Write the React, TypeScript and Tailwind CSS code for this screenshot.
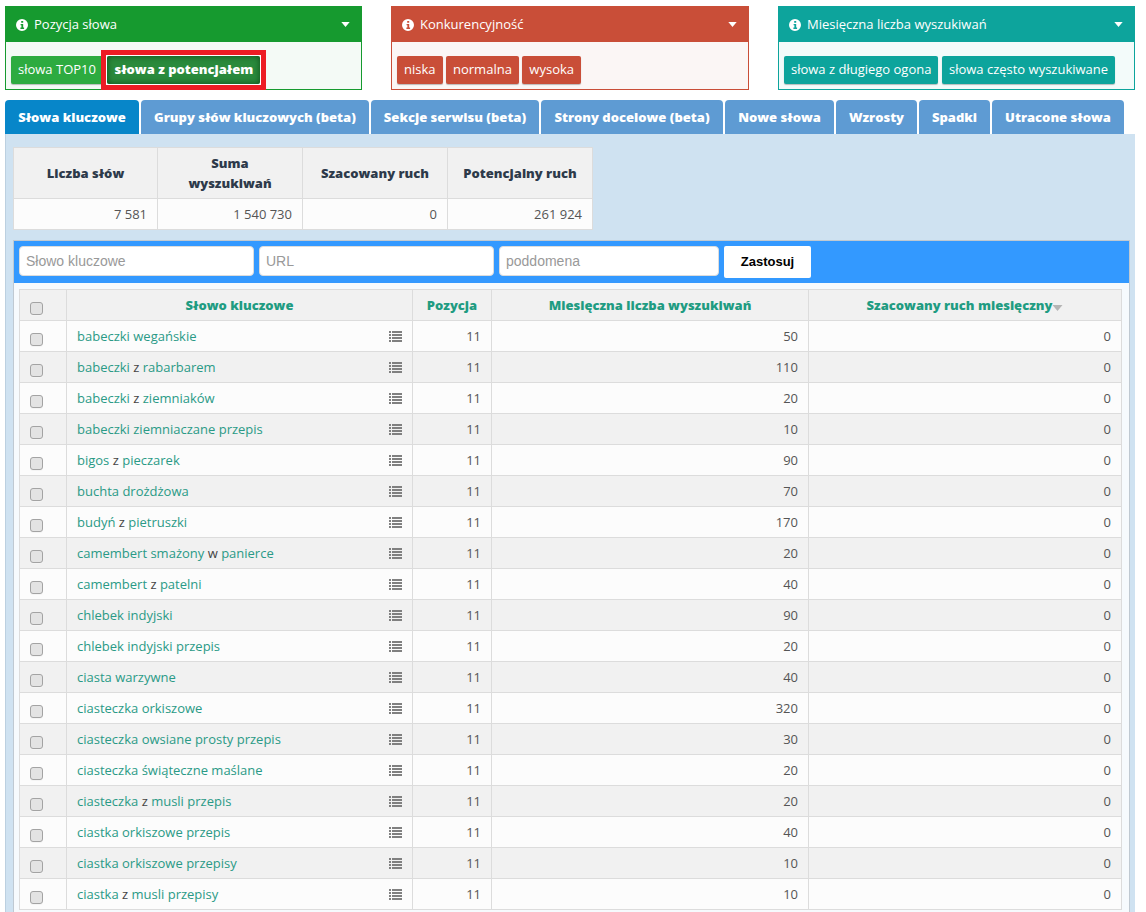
import React from "react";

const tabs: [string, string][] = [
  ["Słowa kluczowe", "w-[134px] bg-[#0786c9]"],
  ["Grupy słów kluczowych (beta)", "w-[228px] bg-[#5e9bd3]"],
  ["Sekcje serwisu (beta)", "w-[168px] bg-[#5e9bd3]"],
  ["Strony docelowe (beta)", "w-[182px] bg-[#5e9bd3]"],
  ["Nowe słowa", "w-[109px] bg-[#5e9bd3]"],
  ["Wzrosty", "w-[81px] bg-[#5e9bd3]"],
  ["Spadki", "w-[71px] bg-[#5e9bd3]"],
  ["Utracone słowa", "w-[132px] bg-[#5e9bd3]"],
];

const rows: [string, number][] = [
  ["babeczki wegańskie", 50],
  ["babeczki z rabarbarem", 110],
  ["babeczki z ziemniaków", 20],
  ["babeczki ziemniaczane przepis", 10],
  ["bigos z pieczarek", 90],
  ["buchta drożdżowa", 70],
  ["budyń z pietruszki", 170],
  ["camembert smażony w panierce", 20],
  ["camembert z patelni", 40],
  ["chlebek indyjski", 90],
  ["chlebek indyjski przepis", 20],
  ["ciasta warzywne", 40],
  ["ciasteczka orkiszowe", 320],
  ["ciasteczka owsiane prosty przepis", 30],
  ["ciasteczka świąteczne maślane", 20],
  ["ciasteczka z musli przepis", 20],
  ["ciastka orkiszowe przepis", 40],
  ["ciastka orkiszowe przepisy", 10],
  ["ciastka z musli przepisy", 10],
];

function Caret({ className }: { className: string }) {
  return (
    <svg viewBox="0 0 10 6" className={className}>
      <path d="M0 0h10L5 6z" fill="currentColor" />
    </svg>
  );
}

function InfoIcon() {
  return (
    <svg viewBox="0 0 12 12" className="mr-[6px] h-[12px] w-[12px]">
      <path
        fill="#fff"
        fillRule="evenodd"
        d="M6 0a6 6 0 1 0 0 12A6 6 0 0 0 6 0zM5.2 2h2v1.8h-2zM4.6 5h2.6v3.6h.9v1.3H4.4V8.6h1V6.2h-.8z"
      />
    </svg>
  );
}

function ListIcon() {
  return (
    <svg viewBox="0 0 13 11" className="h-[11px] w-[13px] text-[#808080]">
      <g fill="currentColor">
        <rect x="0" y="0" width="2" height="2" />
        <rect x="3" y="0" width="10" height="2" />
        <rect x="0" y="3" width="2" height="2" />
        <rect x="3" y="3" width="10" height="2" />
        <rect x="0" y="6" width="2" height="2" />
        <rect x="3" y="6" width="10" height="2" />
        <rect x="0" y="9" width="2" height="2" />
        <rect x="3" y="9" width="10" height="2" />
      </g>
    </svg>
  );
}

function Check() {
  return (
    <span className="ml-[10px] mt-[5px] block h-[13px] w-[13px] rounded-[3px] border border-[#a3a3a3] bg-[#e3e3e3] shadow-[0_1px_0_#f4f4f4]" />
  );
}

function Keyword({ text }: { text: string }) {
  const parts = text.split(" ");
  return (
    <span>
      {parts.map((p, i) => (
        <React.Fragment key={i}>
          {i > 0 ? " " : ""}
          <span className={p === "z" || p === "w" ? "text-[#444]" : "text-[#2a9a86]"}>{p}</span>
        </React.Fragment>
      ))}
    </span>
  );
}

function Panel({
  title,
  head,
  border,
  body,
  children,
}: {
  title: string;
  head: string;
  border: string;
  body: string;
  children: React.ReactNode;
}) {
  return (
    <div className={`h-[84px] border ${border} ${body}`}>
      <div className={`flex h-[35px] items-center pl-[10px] pr-[11px] text-[13px] text-white ${head}`}>
        <InfoIcon />
        <span className="flex-1">{title}</span>
        <Caret className="h-[5px] w-[9px] text-white" />
      </div>
      <div className="flex gap-[3.5px] pl-[5px] pt-[14px]">{children}</div>
    </div>
  );
}

function Btn({ label, className }: { label: string; className: string }) {
  return (
    <span
      className={`flex h-[28px] items-center whitespace-nowrap rounded-[2px] px-[7px] text-[13px] text-white shadow-[0_1px_1px_rgba(0,0,0,0.25)] ${className}`}
    >
      {label}
    </span>
  );
}

const th = "border border-[#dcdcdc] bg-[#f1f1f1] pt-[1px] text-center align-middle font-extrabold";
const td = "border border-[#dcdcdc] pt-[1px] align-middle";

export default function App() {
  return (
    <div
      className="h-[912px] w-[1146px] overflow-hidden bg-white pl-[5px] pt-[6px] text-[13px] text-[#555]"
      style={{ fontFamily: '"Open Sans", sans-serif' }}
    >
      <div className="grid w-[1130px] grid-cols-[357px_358px_357px] gap-x-[29px]">
        <Panel title="Pozycja słowa" head="bg-[#169a2f]" border="border-[#169a2f]" body="bg-[#f4faf6]">
          <Btn label="słowa TOP10" className="bg-[#2dab40]" />
          <span className="-my-[6px] -mr-[6px] ml-[-5px] flex border-[5px] border-[#ed1c24] bg-white p-[1px]">
            <Btn
              label="słowa z potencjałem"
              className="bg-[#2a8a3c] font-extrabold shadow-[inset_0_0_6px_rgba(0,50,10,0.7)]"
            />
          </span>
        </Panel>
        <Panel title="Konkurencyjność" head="bg-[#c94e38]" border="border-[#c94e38]" body="bg-[#fbf6f5]">
          <Btn label="niska" className="bg-[#c94e38]" />
          <Btn label="normalna" className="bg-[#c94e38]" />
          <Btn label="wysoka" className="bg-[#c94e38]" />
        </Panel>
        <Panel
          title="Miesięczna liczba wyszukiwań"
          head="bg-[#0da49c]"
          border="border-[#0da49c]"
          body="bg-[#f3fbfa]"
        >
          <Btn label="słowa z długiego ogona" className="bg-[#0da49c]" />
          <Btn label="słowa często wyszukiwane" className="bg-[#0da49c]" />
        </Panel>
      </div>

      <div className="mt-[10px] flex gap-[2px]">
        {tabs.map(([label, cls]) => (
          <div
            key={label}
            className={`flex h-[34px] items-center justify-center rounded-t-[4px] pt-[1px] text-[13px] font-extrabold whitespace-nowrap text-white ${cls}`}
          >
            {label}
          </div>
        ))}
      </div>

      <div className="w-[1130px] border-l border-[#bcd0e0] bg-[#cfe2f1] pl-[8px] pr-[5px] pt-[13px]">
        <table className="-ml-px w-[579px] table-fixed border-collapse">
          <thead>
            <tr className="h-[51px] text-[#2d3a4a]">
              <th className={`${th} w-[144px]`}>Liczba słów</th>
              <th className={`${th} w-[145px]`}>
                Suma
                <br />
                wyszukiwań
              </th>
              <th className={`${th} w-[145px]`}>Szacowany ruch</th>
              <th className={`${th} w-[145px]`}>Potencjalny ruch</th>
            </tr>
          </thead>
          <tbody>
            <tr className="h-[31px] bg-[#fcfcfc] text-right">
              <td className={`${td} pr-[10px]`}>7 581</td>
              <td className={`${td} pr-[10px]`}>1 540 730</td>
              <td className={`${td} pr-[10px]`}>0</td>
              <td className={`${td} pr-[10px]`}>261 924</td>
            </tr>
          </tbody>
        </table>

        <div className="-ml-px mt-[10px] border border-[#bfc9d2] bg-[#f6fafd] pb-[10px]">
          <div className="flex h-[42px] items-start gap-[5px] bg-[#3399ff] pl-[5px] pt-[5px]">
            <input
              readOnly
              placeholder="Słowo kluczowe"
              className="h-[30px] w-[235px] rounded-[4px] border border-[#dcdcdc] bg-white px-[6px] text-[14px] placeholder:text-[#999]"
              style={{ fontFamily: '"Liberation Sans", sans-serif' }}
            />
            <input
              readOnly
              placeholder="URL"
              className="h-[30px] w-[235px] rounded-[4px] border border-[#dcdcdc] bg-white px-[6px] text-[14px] placeholder:text-[#999]"
              style={{ fontFamily: '"Liberation Sans", sans-serif' }}
            />
            <input
              readOnly
              placeholder="poddomena"
              className="h-[30px] w-[220px] rounded-[4px] border border-[#dcdcdc] bg-white px-[6px] text-[14px] placeholder:text-[#999]"
              style={{ fontFamily: '"Liberation Sans", sans-serif' }}
            />
            <span
              className="flex h-[32px] w-[87px] items-center justify-center rounded-[2px] bg-white text-[13px] font-bold text-black"
              style={{ fontFamily: '"Liberation Sans", sans-serif' }}
            >
              Zastosuj
            </span>
          </div>
          <div className="px-[5px] pt-[6px]">
            <table className="w-[1103px] table-fixed border-collapse">
              <thead>
                <tr className="h-[31px] text-[#1f9c82]">
                  <th className={`${th} w-[47px]`}>
                    <Check />
                  </th>
                  <th className={`${th} w-[346px]`}>Słowo kluczowe</th>
                  <th className={`${th} w-[79px]`}>Pozycja</th>
                  <th className={`${th} w-[317px]`}>Miesięczna liczba wyszukiwań</th>
                  <th className={th}>
                    <span className="inline-flex items-center">
                      Szacowany ruch miesięczny
                      <Caret className="mt-[4px] h-[6px] w-[11px] text-[#b5b5b5]" />
                    </span>
                  </th>
                </tr>
              </thead>
              <tbody>
                {rows.map(([kw, vol], i) => (
                  <tr key={kw} className={`h-[31px] ${i % 2 ? "bg-[#f1f1f1]" : "bg-[#fcfcfc]"}`}>
                    <td className={td}>
                      <Check />
                    </td>
                    <td className={`${td} pl-[10px] pr-[10px]`}>
                      <div className="flex items-center justify-between">
                        <Keyword text={kw} />
                        <ListIcon />
                      </div>
                    </td>
                    <td className={`${td} pr-[10px] text-right`}>11</td>
                    <td className={`${td} pr-[10px] text-right`}>{vol}</td>
                    <td className={`${td} pr-[10px] text-right`}>0</td>
                  </tr>
                ))}
              </tbody>
            </table>
          </div>
        </div>
      </div>
    </div>
  );
}
